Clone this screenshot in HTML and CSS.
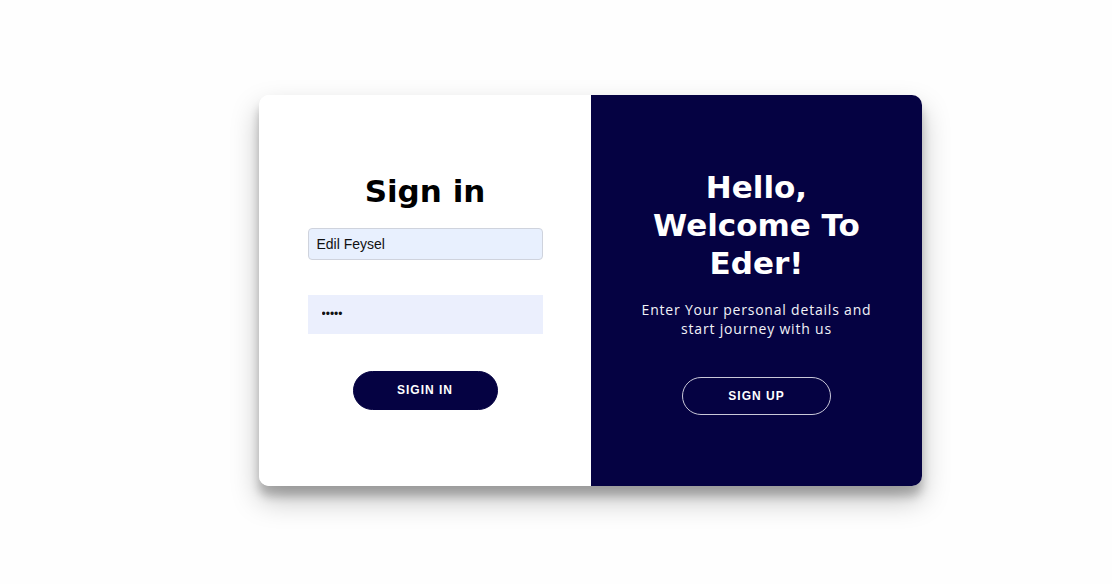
FILE: index.html
```html
<!DOCTYPE html>
<html lang="en">
<head>
<meta charset="utf-8">
<title>Sign in</title>
<link rel="stylesheet" href="styles.css">
</head>
<body>
<div class="card">
  <form class="panel panel-left">
    <h1 class="title">Sign in</h1>
    <input class="field field-filled" type="text" value="Edil Feysel">
    <input class="field field-pass" type="password" value="12345">
    <button class="btn btn-dark" type="button">Sigin In</button>
  </form>
  <div class="panel panel-right">
    <h1 class="title title-light">Hello,<br>Welcome To<br>Eder!</h1>
    <p class="lead">Enter Your personal details and start journey with us</p>
    <button class="btn btn-ghost" type="button">Sign Up</button>
  </div>
</div>
</body>
</html>
```

FILE: styles.css
```css
* { box-sizing: border-box; }

html, body { height: 100%; }

body {
  margin: 0;
  background: #fefefe;
  display: flex;
  align-items: center;
  justify-content: center;
  padding-left: 69px;
  padding-bottom: 3px;
  font-family: "Liberation Sans", Arial, sans-serif;
}

.card {
  display: flex;
  width: 663px;
  height: 391px;
  border-radius: 10px;
  overflow: hidden;
  background: #fff;
  box-shadow: 0 14px 28px rgba(0,0,0,0.25), 0 10px 10px rgba(0,0,0,0.22);
}

.panel {
  display: flex;
  flex-direction: column;
  align-items: center;
  justify-content: center;
  text-align: center;
}

.panel-left {
  width: 332px;
  background: #fff;
  padding-bottom: 0;
}

.panel-right {
  width: 331px;
  background: #050242;
  color: #fff;
  padding: 1px 40px 0;
}

.title {
  margin: 0;
  font-family: "DejaVu Sans", sans-serif;
  font-weight: 700;
  font-size: 31px;
  line-height: 38px;
  color: #000;
}

.title-light { color: #fff; }

.panel-left .title { margin-bottom: 18px; }

.field {
  width: 235px;
  font-family: "Liberation Sans", Arial, sans-serif;
  font-size: 14px;
  color: #111;
  outline: none;
}

.field-filled {
  height: 32px;
  padding: 0 8px;
  background: #e8f0fe;
  border: 1px solid #cfd3dd;
  border-radius: 4px;
}

.field-pass {
  margin-top: 35px;
  height: 39px;
  padding: 0 14px;
  background: #ebeffd;
  border: none;
  font-size: 12px;
  letter-spacing: 0;
}

.btn {
  height: 39px;
  border-radius: 20px;
  font-family: "Liberation Sans", Arial, sans-serif;
  font-weight: 700;
  font-size: 12px;
  letter-spacing: 1px;
  text-transform: uppercase;
  color: #fff;
  cursor: pointer;
}

.btn-dark {
  margin-top: 37px;
  width: 145px;
  background: #050242;
  border: 1px solid #050242;
}

.lead {
  margin: 18px 0 0;
  font-family: "Open Sans", sans-serif;
  font-weight: 400;
  font-size: 14px;
  line-height: 19px;
  letter-spacing: 0.8px;
  color: #f2f2f8;
}

.btn-ghost {
  margin-top: 39px;
  width: 149px;
  height: 38px;
  background: transparent;
  border: 1px solid #c9c8d8;
}
```
